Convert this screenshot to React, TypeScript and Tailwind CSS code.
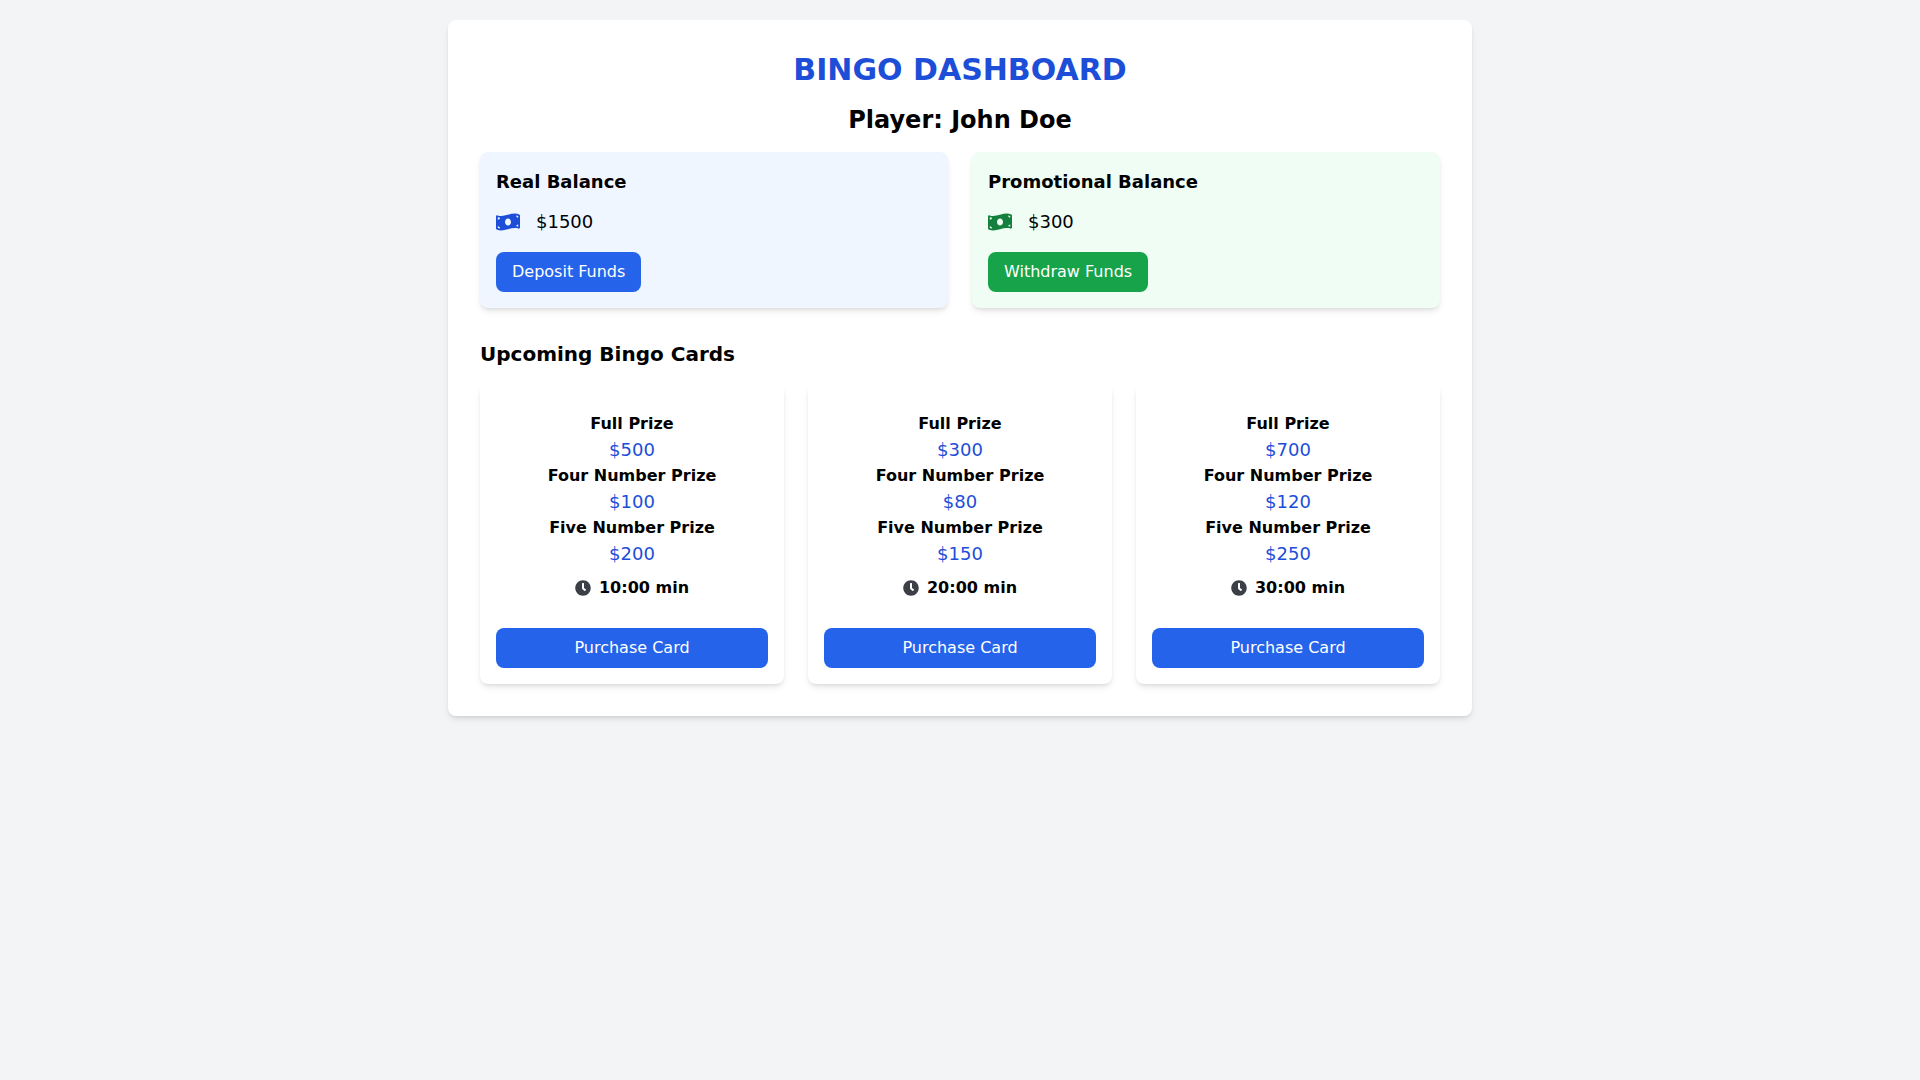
import { FaClock, FaMoneyBillWave } from "react-icons/fa";

const balances = [
  { title: "Real Balance", amount: 1500, action: "Deposit Funds", panel: "bg-[#eff6ff]", icon: "text-[#1d4ed8]", button: "bg-[#2563eb] hover:bg-[#1d4ed8]" },
  { title: "Promotional Balance", amount: 300, action: "Withdraw Funds", panel: "bg-[#f0fdf4]", icon: "text-[#15803d]", button: "bg-[#16a34a] hover:bg-[#15803d]" },
];

const cards = [
  { full: 500, four: 100, five: 200, time: "10:00" },
  { full: 300, four: 80, five: 150, time: "20:00" },
  { full: 700, four: 120, five: 250, time: "30:00" },
];

function Prize({ label, value }: { label: string; value: number }) {
  return (
    <div>
      <h3 className="font-bold">{label}</h3>
      <p className="text-lg text-[#1d4ed8]">${value}</p>
    </div>
  );
}

export default function App() {
  return (
    <div className="min-h-screen bg-[#f3f4f6] p-5 font-['DejaVu_Sans',sans-serif] text-black">
      <main className="mx-auto max-w-5xl rounded-lg bg-white p-8 shadow-md">
        <h1 className="mb-4 text-center text-3xl font-bold text-[#1d4ed8]">BINGO DASHBOARD</h1>
        <h2 className="mb-4 text-center text-2xl font-bold">Player: John Doe</h2>
        <div className="mb-8 grid grid-cols-1 gap-6 md:grid-cols-2">
          {balances.map((b) => (
            <section key={b.title} className={`rounded-lg p-4 shadow-md ${b.panel}`}>
              <h3 className="mb-3 text-lg font-bold">{b.title}</h3>
              <div className="flex items-center gap-4">
                <FaMoneyBillWave className={`size-6 ${b.icon}`} />
                <span className="text-lg">${b.amount}</span>
              </div>
              <button className={`mt-4 rounded-lg px-4 py-2 text-white ${b.button}`}>{b.action}</button>
            </section>
          ))}
        </div>
        <h2 className="mb-4 text-xl font-bold">Upcoming Bingo Cards</h2>
        <div className="grid grid-cols-1 gap-6 md:grid-cols-3">
          {cards.map((c) => (
            <section key={c.time} className="rounded-lg bg-white p-4 text-center shadow-md">
              <div className="py-3">
                <Prize label="Full Prize" value={c.full} />
                <Prize label="Four Number Prize" value={c.four} />
                <Prize label="Five Number Prize" value={c.five} />
                <div className="mt-2 flex items-center justify-center gap-2">
                  <FaClock className="text-[#3c3f45]" />
                  <span className="font-bold">{c.time} min</span>
                </div>
              </div>
              <button className="mt-4 w-full rounded-lg bg-[#2563eb] px-4 py-2 text-white hover:bg-[#1d4ed8]">Purchase Card</button>
            </section>
          ))}
        </div>
      </main>
    </div>
  );
}
